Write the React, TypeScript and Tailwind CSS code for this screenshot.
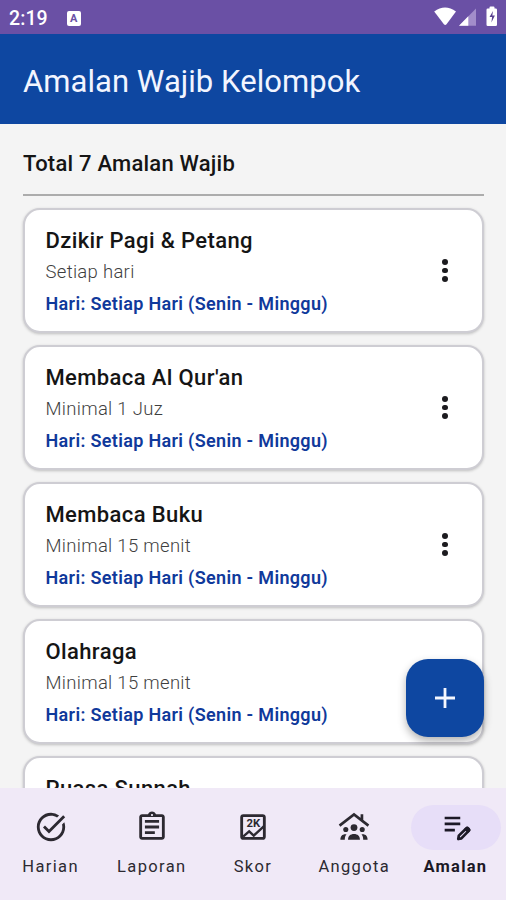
import type { ReactNode } from "react";

const amalan = [
  { title: "Dzikir Pagi & Petang", note: "Setiap hari" },
  { title: "Membaca Al Qur'an", note: "Minimal 1 Juz" },
  { title: "Membaca Buku", note: "Minimal 15 menit" },
  { title: "Olahraga", note: "Minimal 15 menit" },
  { title: "Puasa Sunnah", note: "Minimal 1 hari" },
];

function Icon({ children }: { children: ReactNode }) {
  return (
    <svg viewBox="0 0 24 24" className="size-[34px]" fill="currentColor" aria-hidden>
      {children}
    </svg>
  );
}

const tabs = [
  {
    label: "Harian",
    icon: (
      <path d="M22 5.18 10.59 16.6l-4.24-4.24 1.41-1.41 2.83 2.83 10-10L22 5.18ZM19.79 10.22c.13.57.21 1.17.21 1.78 0 4.42-3.58 8-8 8s-8-3.58-8-8 3.58-8 8-8c1.58 0 3.04.46 4.28 1.25l1.44-1.44A9.9 9.9 0 0 0 12 2C6.48 2 2 6.48 2 12s4.48 10 10 10 10-4.48 10-10c0-1.19-.22-2.33-.6-3.39l-1.61 1.61Z" />
    ),
  },
  {
    label: "Laporan",
    icon: (
      <path d="M7 15h7v2H7zm0-4h10v2H7zm0-4h10v2H7zm12-4h-4.18C14.4 1.84 13.3 1 12 1s-2.4.84-2.82 2H5c-1.1 0-2 .9-2 2v14c0 1.1.9 2 2 2h14c1.1 0 2-.9 2-2V5c0-1.1-.9-2-2-2Zm-7-.25c.41 0 .75.34.75.75s-.34.75-.75.75-.75-.34-.75-.75.34-.75.75-.75ZM19 19H5V5h14v14Z" />
    ),
  },
  {
    label: "Skor",
    icon: (
      <>
        <rect x="4" y="4" width="16" height="16" rx="1.2" fill="none" stroke="currentColor" strokeWidth="2" />
        <path d="m5 18.8 4.3-3.7 3.2 3 7.1-6.6" fill="none" stroke="currentColor" strokeWidth="1.7" />
        <text x="12.2" y="12" textAnchor="middle" fontSize="8" fontWeight="700">
          2K
        </text>
      </>
    ),
  },
  {
    label: "Anggota",
    icon: (
      <>
        <path
          d="m1.8 11 10.2-7.8L22.2 11M17.6 3v4"
          fill="none"
          stroke="currentColor"
          strokeWidth="1.9"
        />
        <circle cx="12" cy="12.4" r="2.4" />
        <circle cx="6.2" cy="13.8" r="1.8" />
        <circle cx="17.8" cy="13.8" r="1.8" />
        <path d="M7.8 21c0-2.5 1.6-4 4.2-4s4.2 1.5 4.2 4ZM2.4 21c0-2.6 1.5-4.2 4.3-3.8-.9 1-1.2 2.3-1.2 3.8ZM21.6 21c0-2.6-1.5-4.2-4.3-3.8.9 1 1.2 2.3 1.2 3.8Z" />
      </>
    ),
  },
  {
    label: "Amalan",
    icon: (
      <>
        <path d="M4 4h11v1.9H4zm0 4.2h11v1.9H4zm0 4.3h7.2v1.9H4z" />
        <path
          d="m13.6 19.8.4-2.4 5-4.9c.5-.5 1.3-.5 1.8 0s.5 1.2 0 1.700l-5 5.100Z"
          fill="none"
          stroke="currentColor"
          strokeWidth="1.9"
          strokeLinejoin="round"
        />
        <path d="m17.600 12.900 2.800 2.800 1.700-1.700c.3-.4.300-.9 0-1.200l-1.600-1.600c-.4-.3-.9-.3-1.200 0Z" />
      </>
    ),
  },
];

function StatusBar() {
  return (
    <div className="flex h-[34px] shrink-0 items-center bg-[#6a50a5] pr-[7px] pl-[9px] text-white">
      <span className="pt-[4px] text-[19.5px] leading-none font-medium tracking-[0.1px]">2:19</span>
      <span className="mt-[2px] ml-[19px] flex h-[15px] w-[14px] items-center justify-center rounded-[2px] bg-white text-[11px] leading-none font-bold text-[#6a50a5]">
        A
      </span>
      <svg className="ml-auto h-[22px] w-[66px]" viewBox="0 0 66 22" aria-hidden>
        <path d="M1.2 5.6Q12-2.5 23 5.6L13.5 18.2q-1.3 1.5-2.6 0Z" fill="#fff" />
        <path d="M26 19.7 43 2.5v17.2Z" fill="#a28dca" />
        <path d="M26 19.7 35.3 10.3v9.4Z" fill="#fff" />
        <path d="M56.5 2.5v-1q0-1 1-1h3q1 0 1 1v1h1.2q1.3 0 1.3 1.3v15q0 1.3-1.3 1.3h-7.9q-1.3 0-1.3-1.3v-15q0-1.3 1.3-1.3Z" fill="#fff" />
        <path d="m60 5-3.5 6h2.6l-.7 5.500 3.500-7h-2.600Z" fill="#59418f" />
      </svg>
    </div>
  );
}

function AmalanCard({ title, note }: { title: string; note: string }) {
  return (
    <li className="flex h-[125px] shrink-0 items-center rounded-[17px] border-2 border-[#cecdd3] bg-white pr-[21px] pl-[20.5px] shadow-[0_1px_3px_rgba(0,0,0,0.22)]">
      <div className="flex-1 pt-[4px] whitespace-nowrap">
        <h2 className="text-[22px] leading-[32px] font-medium tracking-[0.38px] text-[#151515]">{title}</h2>
        <p className="text-[18.5px] leading-[31px] font-light tracking-[0.3px] text-[#3f3f3f]">{note}</p>
        <p className="text-[18px] leading-[32px] font-semibold tracking-[0.33px] text-[#10399b]">
          Hari: Setiap Hari (Senin - Minggu)
        </p>
      </div>
      <button className="flex w-[32px] flex-col items-center gap-[3px]" aria-label="Menu">
        <span className="size-[5.5px] rounded-full bg-[#1c1b1f]" />
        <span className="size-[5.5px] rounded-full bg-[#1c1b1f]" />
        <span className="size-[5.5px] rounded-full bg-[#1c1b1f]" />
      </button>
    </li>
  );
}

export default function App() {
  return (
    <div className="flex h-[900px] w-[506px] flex-col overflow-hidden bg-[#f4f4f4] font-['Roboto',sans-serif]">
      <StatusBar />
      <header className="flex h-[90px] shrink-0 items-center bg-[#0e47a1] px-[23px] pt-[4px]">
        <h1 className="text-[31px] leading-none tracking-[0.05px] text-[#f2f5ff]">Amalan Wajib Kelompok</h1>
      </header>

      <main className="relative min-h-0 flex-1 overflow-hidden pr-[22px] pl-[23px]">
        <p className="h-[70px] pt-[24px] text-[22px] leading-[32px] font-medium tracking-[0.22px] text-[#151515]">
          Total 7 Amalan Wajib
        </p>
        <hr className="mb-[12px] h-[2px] border-0 bg-[#acacac]" />
        <ul className="flex flex-col gap-[12px]">
          {amalan.map((item) => (
            <AmalanCard key={item.title} {...item} />
          ))}
        </ul>
        <button
          className="absolute right-[22px] bottom-[51px] flex size-[78px] items-center justify-center rounded-[22px] bg-[#0e47a1] shadow-[0_4px_8px_rgba(0,0,0,0.3)]"
          aria-label="Tambah"
        >
          <svg viewBox="0 0 20 20" className="size-[20px]" stroke="#f4f7ff" strokeWidth="2.8" aria-hidden>
            <path d="M10 0v20M0 10h20" />
          </svg>
        </button>
      </main>

      <nav className="grid h-[112px] shrink-0 grid-cols-5 bg-[#f0e9f7] pt-[17px]">
        {tabs.map((tab) => {
          const active = tab.label === "Amalan";
          return (
            <div key={tab.label} className="flex flex-col items-center text-[#2c2931]">
              <span
                className={
                  active
                    ? "ml-[2px] flex h-[45px] w-[90px] items-center justify-center rounded-full bg-[#e7def8] text-[#1c1926]"
                    : "flex h-[45px] w-[90px] items-center justify-center pb-[1px]"
                }
              >
                <Icon>{tab.icon}</Icon>
              </span>
              <span
                className={
                  active
                    ? "mt-[7px] text-[16.5px] leading-[20px] font-bold tracking-[1.2px] text-[#1c1926]"
                    : "mt-[7px] text-[16.5px] leading-[20px] tracking-[1.35px] text-[#2c2931]"
                }
              >
                {tab.label}
              </span>
            </div>
          );
        })}
      </nav>
    </div>
  );
}
